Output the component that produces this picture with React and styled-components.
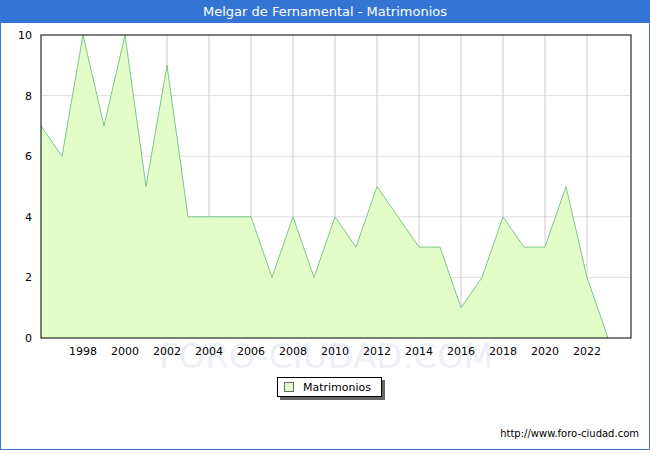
import React from "react"
import styled, { createGlobalStyle } from "styled-components"

const Global = createGlobalStyle`
  html, body { margin: 0; padding: 0; background: #fff; }
  body { font-family: "DejaVu Sans", Verdana, sans-serif; }
`

const data = [7, 6, 10, 7, 10, 5, 9, 4, 4, 4, 4, 2, 4, 2, 4, 3, 5, 4, 3, 3, 1, 2, 4, 3, 3, 5, 2, 0]
const X0 = 40
const STEP = 21
const TOP = 35
const BOTTOM = 338
const xAt = (i) => X0 + i * STEP
const yAt = (v) => BOTTOM - (v / 10) * (BOTTOM - TOP)

const Frame = styled.div`
  width: 650px;
  height: 450px;
  box-sizing: border-box;
  border: 1px solid #3a74d6;
  border-top: none;
  display: flex;
  flex-direction: column;
  position: relative;
`

const TitleBar = styled.div`
  height: 23px;
  background: #3474d4;
  color: #fff;
  font-size: 13px;
  display: flex;
  align-items: center;
  justify-content: center;
`

const Legend = styled.div`
  position: absolute;
  left: 276px;
  top: 377px;
  height: 18px;
  padding: 0 10px 0 6px;
  display: flex;
  align-items: center;
  gap: 9px;
  font-size: 11px;
  color: #000;
  background: #fff;
  border: 1px solid #000;
  box-shadow: 3px 3px 0 #666;
`

const Swatch = styled.span`
  width: 8px;
  height: 8px;
  background: #e3fdc8;
  border: 1px solid #666;
`

const Footer = styled.div`
  position: absolute;
  right: 10px;
  bottom: 10px;
  font-size: 10px;
  color: #000;
`

const Chart = () => {
  const years = []
  for (let y = 1998; y <= 2022; y += 2) years.push(y)
  const pts = data.map((v, i) => `${xAt(i)},${yAt(v)}`).join(" ")
  const area = `${xAt(0)},${BOTTOM} ${pts} ${xAt(data.length - 1)},${BOTTOM}`
  return (
    <svg width="648" height="427" style={{ position: "absolute", left: 0, top: 0 }}>
      {[2, 4, 6, 8].map((v) => (
        <line key={v} x1={X0} x2={630} y1={yAt(v)} y2={yAt(v)} stroke="#ddd" />
      ))}
      {years.map((y) => (
        <line key={y} x1={xAt(y - 1996)} x2={xAt(y - 1996)} y1={TOP} y2={BOTTOM} stroke="#ccc" />
      ))}
      <polygon points={area} fill="#e3fdc8" />
      <polyline points={pts} fill="none" stroke="#7cc58c" strokeWidth="1" />
      <rect x={X0} y={TOP} width={590} height={BOTTOM - TOP} fill="none" stroke="#000" />
      <text x="325" y="368" textAnchor="middle" fontSize="34" fill="#eef0f8" fontFamily="DejaVu Sans">FORO-CIUDAD.COM</text>
      {[0, 2, 4, 6, 8, 10].map((v) => (
        <text key={v} x={31} y={yAt(v) + 4} textAnchor="end" fontSize="11" fontFamily="DejaVu Sans">{v}</text>
      ))}
      {years.map((y) => (
        <text key={y} x={xAt(y - 1996)} y={355} textAnchor="middle" fontSize="11" fontFamily="DejaVu Sans">{y}</text>
      ))}
    </svg>
  )
}

export default function App() {
  return (
    <Frame>
      <Global />
      <TitleBar>Melgar de Fernamental - Matrimonios</TitleBar>
      <Chart />
      <Legend>
        <Swatch />
        Matrimonios
      </Legend>
      <Footer>http://www.foro-ciudad.com</Footer>
    </Frame>
  )
}
